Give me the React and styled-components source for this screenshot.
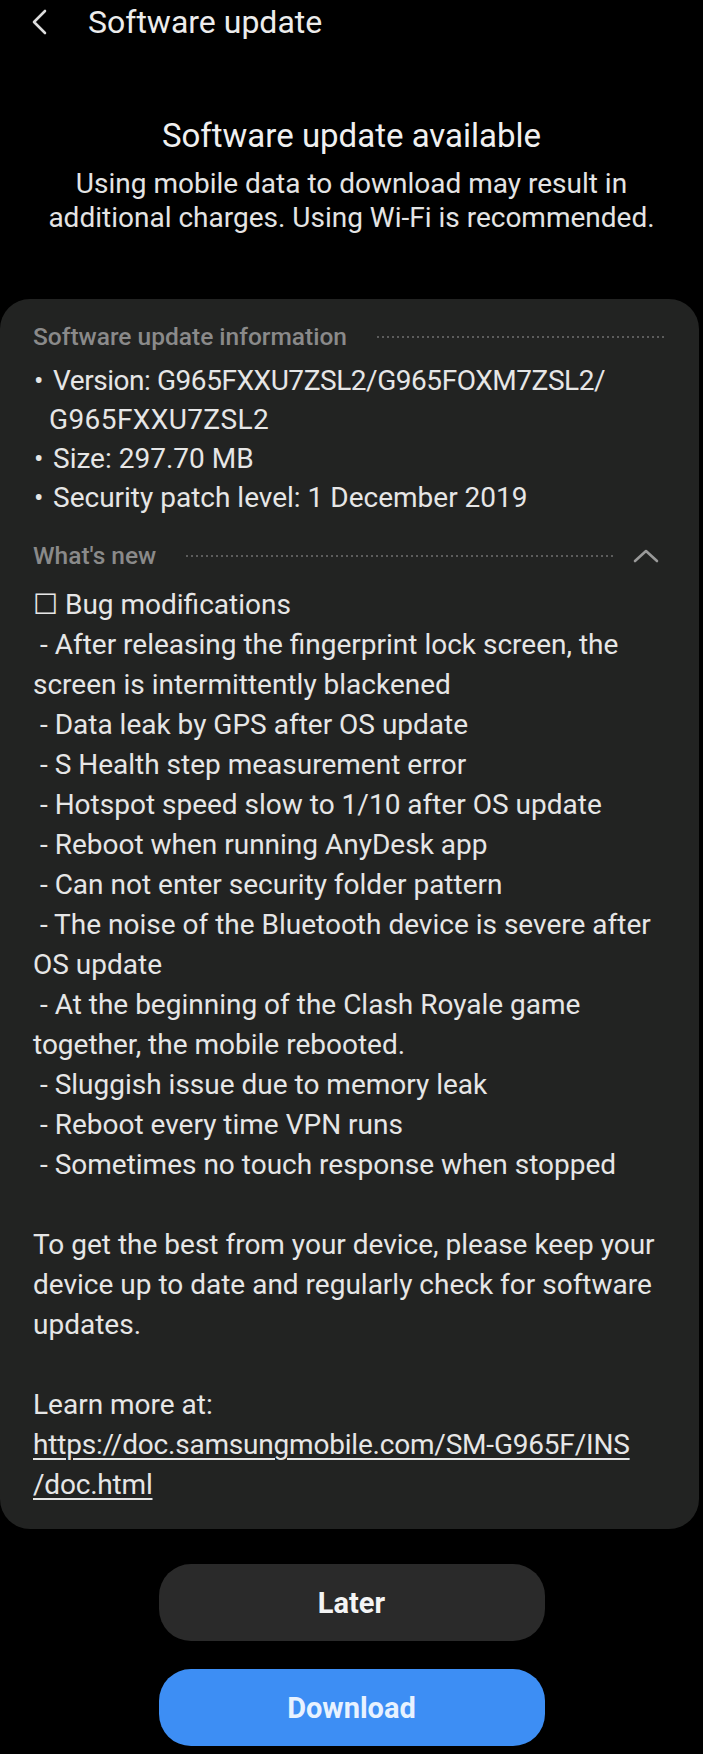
import React from "react";
import styled, { createGlobalStyle } from "styled-components";

const Global = createGlobalStyle`
  html, body { margin: 0; padding: 0; background: #000; }
  body { font-family: Roboto, "Noto Sans", sans-serif; -webkit-font-smoothing: antialiased; }
`;

const Screen = styled.div`
  width: 703px;
  min-height: 1754px;
  background: #000;
  color: #e8e8e8;
  display: flex;
  flex-direction: column;
`;

const Header = styled.header`
  height: 44px;
  display: flex;
  align-items: center;
  padding-left: 30px;
  gap: 40px;
`;

const BackButton = styled.button`
  background: none;
  border: 0;
  padding: 0;
  width: 18px;
  height: 26px;
  display: flex;
  color: #dcdcdc;
`;

const HeaderTitle = styled.h1`
  margin: 0;
  font-size: 32px;
  line-height: 44px;
  font-weight: 400;
  color: #ececec;
`;

const Intro = styled.section`
  margin-top: 72px;
  text-align: center;
  display: flex;
  flex-direction: column;
  align-items: center;
  gap: 11px;
`;

const IntroTitle = styled.h2`
  margin: 0;
  font-size: 33px;
  line-height: 40px;
  font-weight: 400;
  color: #f0f0f0;
`;

const IntroText = styled.p`
  margin: 0;
  font-size: 28px;
  line-height: 34px;
  color: #e4e4e4;
`;

const Card = styled.section`
  margin: 64px 4px 0 0;
  background: #222322;
  border-radius: 30px;
  padding: 22px 33px 24px 33px;
`;

const SectionHead = styled.div`
  display: flex;
  align-items: center;
  height: 30px;
  margin-top: ${(p) => p.$top || 0}px;
`;

const SectionLabel = styled.span`
  font-size: 24.5px;
  font-weight: 500;
  color: #8a8a8a;
  white-space: nowrap;
`;

const Dots = styled.span`
  flex: 1;
  height: 2px;
  margin-left: 30px;
  margin-top: 2px;
  background: repeating-linear-gradient(to right, #5c5c5c 0 2px, transparent 2px 5px);
`;

const Chevron = styled.svg`
  width: 28px;
  height: 16px;
  margin-left: 18px;
  margin-right: 6px;
  flex: none;
`;

const InfoList = styled.ul`
  list-style: none;
  margin: 10px 0 0;
  padding: 0;
`;

const InfoItem = styled.li`
  font-size: 28px;
  line-height: 39px;
  color: #e6e6e6;
  white-space: nowrap;
  letter-spacing: ${(p) => p.$spacing || 0}px;
  padding-left: ${(p) => (p.$cont ? 16 : 0)}px;
  &::before {
    content: ${(p) => (p.$cont ? "none" : '"•"')};
    display: inline-block;
    width: 20px;
    padding-left: 1px;
    box-sizing: border-box;
    letter-spacing: 0;
  }
`;

const Notes = styled.div`
  margin-top: 15px;
`;

const NoteLine = styled.div`
  font-size: 28px;
  line-height: 40px;
  height: 40px;
  color: #e6e6e6;
  white-space: pre;
`;

const Link = styled.a`
  color: #e6e6e6;
  text-decoration: underline;
  text-underline-offset: 4px;
  text-decoration-thickness: 2px;
  letter-spacing: -0.2px;
`;

const Actions = styled.div`
  display: flex;
  flex-direction: column;
  align-items: center;
  gap: 28px;
  margin-top: 35px;
`;

const ActionButton = styled.button`
  width: 386px;
  height: 77px;
  border: 0;
  border-radius: 32px;
  background: ${(p) => (p.$primary ? "#3d8ef4" : "#2a2a2a")};
  color: ${(p) => (p.$primary ? "#e8f2ff" : "#f4f4f4")};
  font-family: Roboto, "Noto Sans", sans-serif;
  font-size: 29px;
  font-weight: 700;
`;

const notes = [
  "☐ Bug modifications",
  " - After releasing the fingerprint lock screen, the",
  "screen is intermittently blackened",
  " - Data leak by GPS after OS update",
  " - S Health step measurement error",
  " - Hotspot speed slow to 1/10 after OS update",
  " - Reboot when running AnyDesk app",
  " - Can not enter security folder pattern",
  " - The noise of the Bluetooth device is severe after",
  "OS update",
  " - At the beginning of the Clash Royale game",
  "together, the mobile rebooted.",
  " - Sluggish issue due to memory leak",
  " - Reboot every time VPN runs",
  " - Sometimes no touch response when stopped",
  "",
  "To get the best from your device, please keep your",
  "device up to date and regularly check for software",
  "updates.",
  "",
  "Learn more at:",
];

export default function App() {
  return (
    <Screen>
      <Global />
      <Header>
        <BackButton aria-label="Back">
          <svg width="18" height="26" viewBox="0 0 18 26" fill="none">
            <path d="M15 2 L4 13 L15 24" stroke="currentColor" strokeWidth="2.6" strokeLinecap="round" strokeLinejoin="round" />
          </svg>
        </BackButton>
        <HeaderTitle>Software update</HeaderTitle>
      </Header>

      <Intro>
        <IntroTitle>Software update available</IntroTitle>
        <IntroText>
          Using mobile data to download may result in
          <br />
          additional charges. Using Wi-Fi is recommended.
        </IntroText>
      </Intro>

      <Card>
        <SectionHead>
          <SectionLabel>Software update information</SectionLabel>
          <Dots />
        </SectionHead>
        <InfoList>
          <InfoItem $spacing={-0.45}>Version: G965FXXU7ZSL2/G965FOXM7ZSL2/</InfoItem>
          <InfoItem $cont $spacing={0.4}>G965FXXU7ZSL2</InfoItem>
          <InfoItem>Size: 297.70 MB</InfoItem>
          <InfoItem>Security patch level: 1 December 2019</InfoItem>
        </InfoList>

        <SectionHead $top={23}>
          <SectionLabel>What's new</SectionLabel>
          <Dots />
          <Chevron viewBox="0 0 28 16" fill="none">
            <path d="M3 14 L14 4 L25 14" stroke="#9a9a9a" strokeWidth="2.6" strokeLinecap="round" strokeLinejoin="round" />
          </Chevron>
        </SectionHead>
        <Notes>
          {notes.map((t, i) => (
            <NoteLine key={i}>{t}</NoteLine>
          ))}
          <NoteLine>
            <Link href="#">https://doc.samsungmobile.com/SM-G965F/INS</Link>
          </NoteLine>
          <NoteLine>
            <Link href="#">/doc.html</Link>
          </NoteLine>
        </Notes>
      </Card>

      <Actions>
        <ActionButton>Later</ActionButton>
        <ActionButton $primary>Download</ActionButton>
      </Actions>
    </Screen>
  );
}
